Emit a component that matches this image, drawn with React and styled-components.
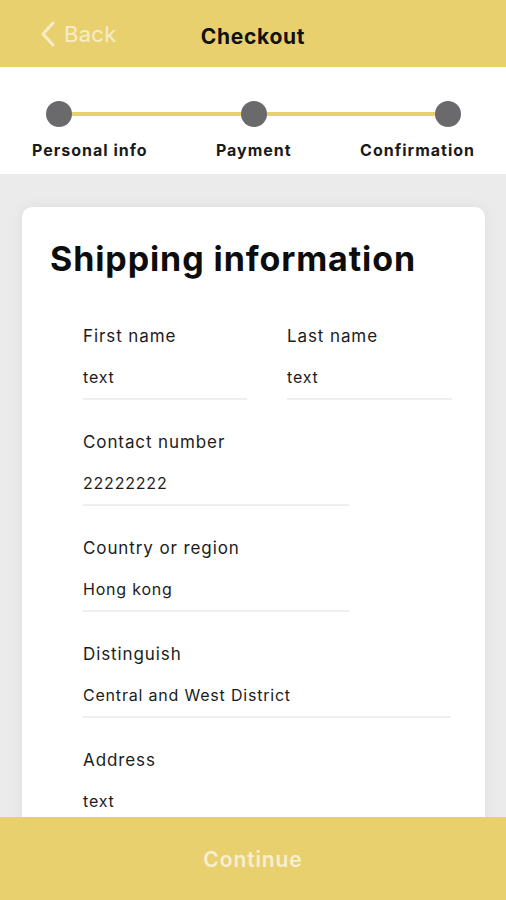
import React from 'react'
import styled, { createGlobalStyle } from 'styled-components'

const GlobalStyle = createGlobalStyle`
  html, body {
    margin: 0;
    padding: 0;
    background: #ebebeb;
  }
  body {
    font-family: Inter, "Liberation Sans", sans-serif;
    -webkit-font-smoothing: antialiased;
  }
`

const yellow = '#e9d06f'

const Screen = styled.div`
  width: 506px;
  height: 900px;
  display: flex;
  flex-direction: column;
  overflow: hidden;
  background: #ebebeb;
`

const Header = styled.header`
  flex: 0 0 67px;
  background: ${yellow};
  display: grid;
  grid-template-columns: 1fr auto 1fr;
  align-items: center;
  padding-top: 6px;
  box-sizing: border-box;
`

const BackButton = styled.button`
  justify-self: start;
  display: flex;
  align-items: center;
  gap: 8px;
  margin-left: 39px;
  margin-top: -6px;
  padding: 0;
  border: 0;
  background: none;
  color: #f6edc8;
  font-family: Inter, "Liberation Sans", sans-serif;
  font-size: 22px;
  font-weight: 400;
  letter-spacing: 0.3px;
`

const Title = styled.h1`
  margin: 0;
  font-size: 21px;
  font-weight: 700;
  color: #111;
  letter-spacing: 0.7px;
`

const Stepper = styled.div`
  flex: 0 0 107px;
  background: #fff;
  display: flex;
  flex-direction: column;
  padding: 34px 31px 0 32px;
  box-sizing: border-box;
`

const DotRow = styled.div`
  position: relative;
  display: flex;
  justify-content: space-between;
  padding: 0 14px 0 14px;
`

const Track = styled.div`
  position: absolute;
  left: 27px;
  right: 27px;
  top: 11px;
  height: 4px;
  background: ${yellow};
`

const Dot = styled.span`
  position: relative;
  width: 26px;
  height: 26px;
  border-radius: 50%;
  background: #6a6a6c;
`

const LabelRow = styled.div`
  display: flex;
  justify-content: space-between;
  margin-top: 13px;
`

const StepLabel = styled.span`
  font-size: 16px;
  font-weight: 700;
  color: #1a1a1a;
  white-space: nowrap;
  letter-spacing: 1px;
`

const Body = styled.main`
  flex: 1;
  min-height: 0;
  padding: 33px 21px 0 22px;
  overflow: hidden;
`

const Card = styled.section`
  background: #fff;
  border-radius: 10px;
  box-shadow: 0 0 14px rgba(0, 0, 0, 0.06);
  padding: 30px 34px 40px 28px;
  min-height: 800px;
  box-sizing: border-box;
`

const Heading = styled.h2`
  margin: 0 0 44px;
  font-size: 34px;
  line-height: 44px;
  font-weight: 700;
  color: #0d0d0d;
  letter-spacing: 0.9px;
`

const Fields = styled.div`
  padding-left: 33px;
  display: grid;
  grid-template-columns: 164px 165px;
  column-gap: 40px;
  row-gap: 31px;
`

const Field = styled.div`
  grid-column: ${p => (p.$span ? 'span 2' : 'auto')};
  width: ${p => (p.$width ? `${p.$width}px` : 'auto')};
`

const Label = styled.div`
  font-size: 17px;
  line-height: 22px;
  color: #1c1c1c;
  letter-spacing: 0.9px;
`

const Value = styled.div`
  margin-top: 19px;
  padding-bottom: 10px;
  font-size: 16px;
  line-height: 22px;
  color: #1c1c1c;
  letter-spacing: 0.8px;
  border-bottom: 2px solid #efefef;
`

const Footer = styled.footer`
  flex: 0 0 83px;
  background: ${yellow};
  display: flex;
  align-items: center;
  justify-content: center;
  padding-top: 2px;
  box-sizing: border-box;
`

const ContinueButton = styled.button`
  border: 0;
  background: none;
  color: #f7efd0;
  font-family: Inter, "Liberation Sans", sans-serif;
  font-size: 21px;
  font-weight: 600;
  letter-spacing: 0.9px;
`

const Chevron = () => (
  <svg width="17" height="28" viewBox="0 0 17 28" fill="none">
    <path d="M14 3 L4 14 L14 25" stroke="#f6edc8" strokeWidth="3" strokeLinecap="round" strokeLinejoin="round" />
  </svg>
)

const steps = ['Personal info', 'Payment', 'Confirmation']

const fields = [
  { label: 'First name', value: 'text' },
  { label: 'Last name', value: 'text' },
  { label: 'Contact number', value: '22222222', span: true, width: 266 },
  { label: 'Country or region', value: 'Hong kong', span: true, width: 266 },
  { label: 'Distinguish', value: 'Central and West District', span: true, width: 368 },
  { label: 'Address', value: 'text', span: true, width: 368 },
]

export default function App() {
  return (
    <Screen>
      <GlobalStyle />
      <Header>
        <BackButton>
          <Chevron />
          Back
        </BackButton>
        <Title>Checkout</Title>
        <span />
      </Header>
      <Stepper>
        <DotRow>
          <Track />
          {steps.map(s => (
            <Dot key={s} />
          ))}
        </DotRow>
        <LabelRow>
          {steps.map(s => (
            <StepLabel key={s}>{s}</StepLabel>
          ))}
        </LabelRow>
      </Stepper>
      <Body>
        <Card>
          <Heading>Shipping information</Heading>
          <Fields>
            {fields.map(f => (
              <Field key={f.label} $span={f.span} $width={f.width}>
                <Label>{f.label}</Label>
                <Value>{f.value}</Value>
              </Field>
            ))}
          </Fields>
        </Card>
      </Body>
      <Footer>
        <ContinueButton>Continue</ContinueButton>
      </Footer>
    </Screen>
  )
}
